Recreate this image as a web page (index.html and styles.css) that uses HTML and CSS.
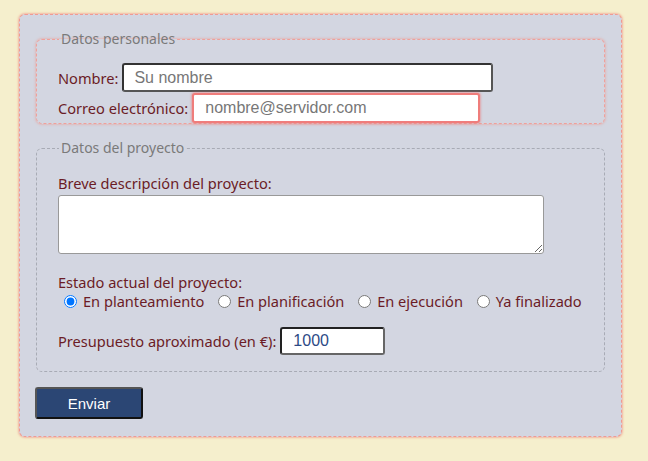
FILE: index.html
```html
<!DOCTYPE html>
<html lang="es">
<head>
<meta charset="utf-8">
<title>Formulario</title>
<link rel="stylesheet" href="styles.css">
</head>
<body>
<form class="panel">
  <fieldset class="fs fs-personal">
    <legend>Datos personales</legend>
    <div class="row row-name">
      <label for="nombre">Nombre:</label>
      <input id="nombre" class="field field-name" type="text" placeholder="Su nombre">
    </div>
    <div class="row row-mail">
      <label for="correo">Correo electrónico:</label>
      <input id="correo" class="field field-mail" type="email" placeholder="nombre@servidor.com">
    </div>
  </fieldset>
  <fieldset class="fs fs-project">
    <legend>Datos del proyecto</legend>
    <label class="block-label desc-label" for="desc">Breve descripción del proyecto:</label>
    <textarea id="desc" class="desc"></textarea>
    <div class="block-label estado">Estado actual del proyecto:</div>
    <div class="radios">
      <input type="radio" name="estado" id="e1" checked><label for="e1">En planteamiento</label>
      <input type="radio" name="estado" id="e2"><label for="e2">En planificación</label>
      <input type="radio" name="estado" id="e3"><label for="e3">En ejecución</label>
      <input type="radio" name="estado" id="e4"><label for="e4">Ya finalizado</label>
    </div>
    <div class="row row-budget">
      <label for="pres">Presupuesto aproximado (en €):</label>
      <input id="pres" class="field field-budget" type="text" value="1000">
    </div>
  </fieldset>
  <button class="send" type="button">Enviar</button>
</form>
</body>
</html>
```

FILE: styles.css
```css
html, body {
  margin: 0;
  padding: 0;
}
body {
  background: #f5efcd;
  font-family: "Noto Sans", "Open Sans", sans-serif;
  font-size: 14.6px;
  color: #6b1c26;
  padding: 14px 0 0 19px;
  height: 461px;
  box-sizing: border-box;
}
.panel {
  box-sizing: border-box;
  width: 603px;
  height: 423px;
  background: #d3d6e1;
  border: 1px dashed #f09a94;
  border-radius: 6px;
  box-shadow: 0 0 2px 1px rgba(240, 140, 130, 0.55);
  padding: 0 16px;
  display: flex;
  flex-direction: column;
  align-items: flex-start;
}
.fs {
  box-sizing: border-box;
  width: 569px;
  margin: 0;
  padding: 0 20px 0 21px;
  border-radius: 6px;
  min-width: 0;
  flex-shrink: 0;
}
.fs legend {
  color: #7a7a7a;
  padding: 0 2px;
  margin-left: 1px;
  line-height: 18px;
  font-size: 14px;
}
.fs-personal {
  margin-top: 15px;
  border: 1px dashed #f0a09a;
  box-shadow: 0 0 2px 1px rgba(240, 150, 140, 0.45);
  padding-bottom: 0;
}
.fs-project {
  margin-top: 15px;
  border: 1px dashed #a8abb5;
  padding-bottom: 16px;
}
.row {
  display: flex;
  align-items: center;
}
.row label {
  margin-right: 4px;
}
.row-name {
  margin-top: 15px;
  height: 29px;
}
.row-mail {
  margin-top: 1px;
  height: 30px;
}
.field {
  box-sizing: border-box;
  font-family: "Liberation Sans", Arial, sans-serif;
  font-size: 16px;
  padding: 0 0 0 10px;
  background: #fff;
  border-radius: 3px;
  outline: none;
}
.field::placeholder {
  color: #777;
}
.field-name {
  width: 371px;
  height: 29px;
  border: 2px solid #555;
  border-top-color: #333;
  border-left-color: #333;
}
.field-mail {
  width: 288px;
  height: 30px;
  border: 2px solid #ef7d7b;
  box-shadow: 0 0 2px 1px rgba(240, 120, 120, 0.5);
  padding-left: 11px;
}
.block-label {
  display: block;
  line-height: 18px;
}
.desc-label {
  margin-top: 17px;
}
.desc {
  display: block;
  box-sizing: border-box;
  width: 486px;
  height: 59px;
  margin: 3px 0 0 0;
  border: 1px solid #999;
  border-radius: 3px;
  background: #fff;
  resize: vertical;
}
.estado {
  margin-top: 19px;
}
.radios {
  line-height: 18px;
  height: 18px;
  margin-top: 1px;
  white-space: nowrap;
}
.radios input {
  margin: 3px 6px 0 6px;
  vertical-align: -1px;
  width: 13px;
  height: 13px;
}
.radios label {
  margin-right: 4px;
}
.row-budget {
  margin-top: 17px;
  height: 28px;
}
.field-budget {
  width: 105px;
  height: 28px;
  color: #2d4a86;
  border: 2px solid #666;
  border-top-color: #222;
  border-left-color: #222;
  padding-left: 11px;
}
.send {
  flex-shrink: 0;
  margin-top: 15px;
  width: 108px;
  height: 32px;
  box-sizing: border-box;
  background: #2b4674;
  color: #fff;
  font-family: "Liberation Sans", Arial, sans-serif;
  font-size: 15px;
  border: 2px solid #111;
  border-top-color: #555;
  border-left-color: #555;
  border-radius: 3px;
  margin-left: -1px;
}
```
